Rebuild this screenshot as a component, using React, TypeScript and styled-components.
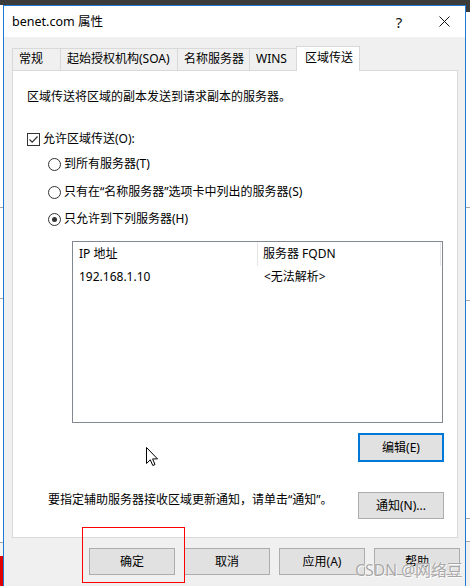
import React from "react";
import styled, { createGlobalStyle } from "styled-components";

const Global = createGlobalStyle`
  html, body { margin: 0; padding: 0; background: #fff; }
  body {
    font-family: "Noto Sans", "Noto Sans CJK SC", sans-serif;
    font-size: 12px;
    color: #000;
  }
  * { box-sizing: border-box; }
`;

const Desktop = styled.div`
  position: relative;
  width: 470px;
  height: 586px;
  overflow: hidden;
  display: flex;
  flex-direction: column;
  background: #fff;
`;

const TopStrip = styled.div`
  height: 5px;
  flex: none;
  background: #3b3b3b;
`;

const Row = styled.div`
  display: flex;
  flex: 1;
  min-height: 0;
`;

const LeftGutter = styled.div`
  width: 3px;
  flex: none;
  background: linear-gradient(
    to bottom,
    #fff 0 202px,
    #a8a8a8 202px 203px,
    #fff 203px 293px,
    #a8a8a8 293px 294px,
    #fff 294px 537px,
    #a8a8a8 537px 538px,
    #f4f4f4 538px 551px,
    #e00000 551px 100%
  );
`;

const RightGutter = styled.div`
  width: 4px;
  flex: none;
  background: linear-gradient(
    to bottom,
    #3b3b3b 0 7px,
    #fff 7px 202px,
    #a8a8a8 202px 203px,
    #fff 203px 295px,
    #a8a8a8 295px 296px,
    #fff 296px 513px,
    #a8a8a8 513px 514px,
    #fff 514px 536px,
    #a8a8a8 536px 537px,
    #f0f0f0 537px 100%
  );
`;

const Window = styled.div`
  width: 463px;
  flex: none;
  border: 1px solid #1a7ad4;
  border-bottom: none;
  background: #f0f0f0;
  display: flex;
  flex-direction: column;
`;

const TitleBar = styled.div`
  height: 31px;
  flex: none;
  display: flex;
  align-items: center;
  background: #fff;
  padding-left: 8px;
`;

const Title = styled.div`
  flex: 1;
  font-size: 12.5px;
  line-height: 16px;
`;

const CaptionButton = styled.div<{ $w: number }>`
  width: ${(p) => p.$w}px;
  height: 31px;
  display: flex;
  align-items: center;
  justify-content: center;
  font-size: 15px;
  color: #111;
`;

const Body = styled.div`
  padding: 9px 7px 0 8px;
  display: flex;
  flex-direction: column;
`;

const TabStrip = styled.div`
  display: flex;
  align-items: flex-end;
  height: 25px;
  margin-bottom: -1px;
  position: relative;
  z-index: 1;
`;

const Tab = styled.div<{ $w: number; $active?: boolean }>`
  width: ${(p) => p.$w}px;
  height: ${(p) => (p.$active ? 25 : 22)}px;
  margin-bottom: ${(p) => (p.$active ? 0 : 1)}px;
  margin-left: -1px;
  &:first-child { margin-left: 0; }
  border: 1px solid #d9d9d9;
  border-bottom: none;
  background: ${(p) => (p.$active ? "#fff" : "#f0f0f0")};
  position: relative;
  z-index: ${(p) => (p.$active ? 2 : 1)};
  padding-left: ${(p) => (p.$active ? 8 : 6)}px;
  padding-top: ${(p) => (p.$active ? 3 : 2)}px;
  line-height: 16px;
  white-space: nowrap;
`;

const Panel = styled.div`
  height: 468px;
  border: 1px solid #d9d9d9;
  background: #fff;
  padding: 18px 13px 0 14px;
  display: flex;
  flex-direction: column;
`;

const Text = styled.div`
  line-height: 16px;
  white-space: nowrap;
`;

const CheckRow = styled.div`
  margin-top: 26px;
  height: 16px;
  display: flex;
  align-items: center;
  gap: 3px;
`;

const CheckBox = styled.div`
  width: 13px;
  height: 13px;
  border: 1px solid #333;
  background: #fff;
  display: flex;
  align-items: center;
  justify-content: center;
`;

const RadioRow = styled.div<{ $mt: number }>`
  margin-top: ${(p) => p.$mt}px;
  margin-left: 21px;
  height: 16px;
  display: flex;
  align-items: center;
  gap: 3px;
`;

const RadioCircle = styled.div<{ $on?: boolean }>`
  width: 13px;
  height: 13px;
  border-radius: 50%;
  border: 1px solid #333;
  background: #fff;
  display: flex;
  align-items: center;
  justify-content: center;
  &::after {
    content: "";
    width: 5px;
    height: 5px;
    border-radius: 50%;
    background: ${(p) => (p.$on ? "#333" : "transparent")};
  }
`;

const ListBox = styled.div`
  margin: 14px 0 0 45px;
  width: 371px;
  height: 182px;
  border: 1px solid #828790;
  background: #fff;
`;

const ListLine = styled.div<{ $h: number }>`
  display: flex;
  height: ${(p) => p.$h}px;
`;

const Cell = styled.div<{ $w: number; $pl: number; $divider?: boolean }>`
  width: ${(p) => p.$w}px;
  padding-left: ${(p) => p.$pl}px;
  border-right: 1px solid ${(p) => (p.$divider ? "#e5e5e5" : "transparent")};
  display: flex;
  align-items: center;
  white-space: nowrap;
  line-height: 16px;
`;

const ActionRow = styled.div<{ $mt: number }>`
  margin-top: ${(p) => p.$mt}px;
  display: flex;
  align-items: flex-start;
  justify-content: space-between;
`;

const Spacer = styled.div``;

const NoteText = styled(Text)`
  padding-left: 21px;
`;

const Button = styled.div<{ $focus?: boolean }>`
  width: 86px;
  height: ${(p) => (p.$focus ? 29 : 27)}px;
  background: #e1e1e1;
  border: ${(p) => (p.$focus ? "2px solid #0078d7" : "1px solid #adadad")};
  display: flex;
  align-items: center;
  justify-content: center;
  line-height: 16px;
  white-space: nowrap;
`;

const ButtonRow = styled.div`
  margin-top: 10px;
  margin-right: -2px;
  display: flex;
  justify-content: flex-end;
  gap: 9px;
`;

const Cursor = styled.svg`
  position: absolute;
  left: 146px;
  top: 447px;
`;

const Highlight = styled.div`
  position: absolute;
  left: 82px;
  top: 527px;
  width: 103px;
  height: 56px;
  border: 1px solid #ff0000;
`;

const Watermark = styled.div`
  position: absolute;
  left: 355px;
  top: 560px;
  font-size: 16px;
  line-height: 20px;
  color: rgba(140, 140, 140, 0.75);
  text-shadow: 0 0 1px #fff, 1px 1px 0 rgba(255, 255, 255, 0.8);
  white-space: nowrap;
  letter-spacing: -0.2px;
`;

const tabs = [
  { label: "常规", w: 49 },
  { label: "起始授权机构(SOA)", w: 118 },
  { label: "名称服务器", w: 73 },
  { label: "WINS", w: 48 },
  { label: "区域传送", w: 64, active: true },
];

export default function App() {
  return (
    <>
      <Global />
      <Desktop>
        <TopStrip />
        <Row>
          <LeftGutter />
          <Window>
            <TitleBar>
              <Title>benet.com 属性</Title>
              <CaptionButton $w={48}>?</CaptionButton>
              <CaptionButton $w={42}>
                <svg width="11" height="11" viewBox="0 0 11 11">
                  <path d="M0.5 0.5 L10.5 10.5 M10.5 0.5 L0.5 10.5" stroke="#111" strokeWidth="1" />
                </svg>
              </CaptionButton>
            </TitleBar>
            <Body>
              <TabStrip>
                {tabs.map((t) => (
                  <Tab key={t.label} $w={t.w} $active={t.active}>
                    {t.label}
                  </Tab>
                ))}
              </TabStrip>
              <Panel>
                <Text>区域传送将区域的副本发送到请求副本的服务器。</Text>
                <CheckRow>
                  <CheckBox>
                    <svg width="11" height="11" viewBox="0 0 11 11">
                      <path d="M1.5 5.5 L4.2 8.2 L9.5 2.5" fill="none" stroke="#333" strokeWidth="1.2" />
                    </svg>
                  </CheckBox>
                  <Text>允许区域传送(O):</Text>
                </CheckRow>
                <RadioRow $mt={9}>
                  <RadioCircle />
                  <Text>到所有服务器(T)</Text>
                </RadioRow>
                <RadioRow $mt={12}>
                  <RadioCircle />
                  <Text>只有在“名称服务器”选项卡中列出的服务器(S)</Text>
                </RadioRow>
                <RadioRow $mt={11}>
                  <RadioCircle $on />
                  <Text>只允许到下列服务器(H)</Text>
                </RadioRow>
                <ListBox>
                  <ListLine $h={24}>
                    <Cell $w={185} $pl={6} $divider>IP 地址</Cell>
                    <Cell $w={183} $pl={5} $divider>服务器 FQDN</Cell>
                  </ListLine>
                  <ListLine $h={22}>
                    <Cell $w={185} $pl={6}>192.168.1.10</Cell>
                    <Cell $w={183} $pl={6}>&lt;无法解析&gt;</Cell>
                  </ListLine>
                </ListBox>
                <ActionRow $mt={10}>
                  <Spacer />
                  <Button $focus>编辑(E)</Button>
                </ActionRow>
                <ActionRow $mt={30}>
                  <NoteText>要指定辅助服务器接收区域更新通知，请单击“通知”。</NoteText>
                  <Button>通知(N)...</Button>
                </ActionRow>
              </Panel>
              <ButtonRow>
                <Button>确定</Button>
                <Button>取消</Button>
                <Button>应用(A)</Button>
                <Button>帮助</Button>
              </ButtonRow>
            </Body>
          </Window>
          <RightGutter />
        </Row>
        <Cursor width="13" height="20" viewBox="0 0 13 20">
          <path
            d="M0.5 0.5 L0.5 16.5 L4.3 12.8 L6.8 18.5 L9 17.5 L6.6 11.9 L11.5 11.9 Z"
            fill="#fff"
            stroke="#000"
            strokeWidth="1"
            strokeLinejoin="miter"
          />
        </Cursor>
        <Highlight />
        <Watermark>CSDN @网络豆</Watermark>
      </Desktop>
    </>
  );
}
